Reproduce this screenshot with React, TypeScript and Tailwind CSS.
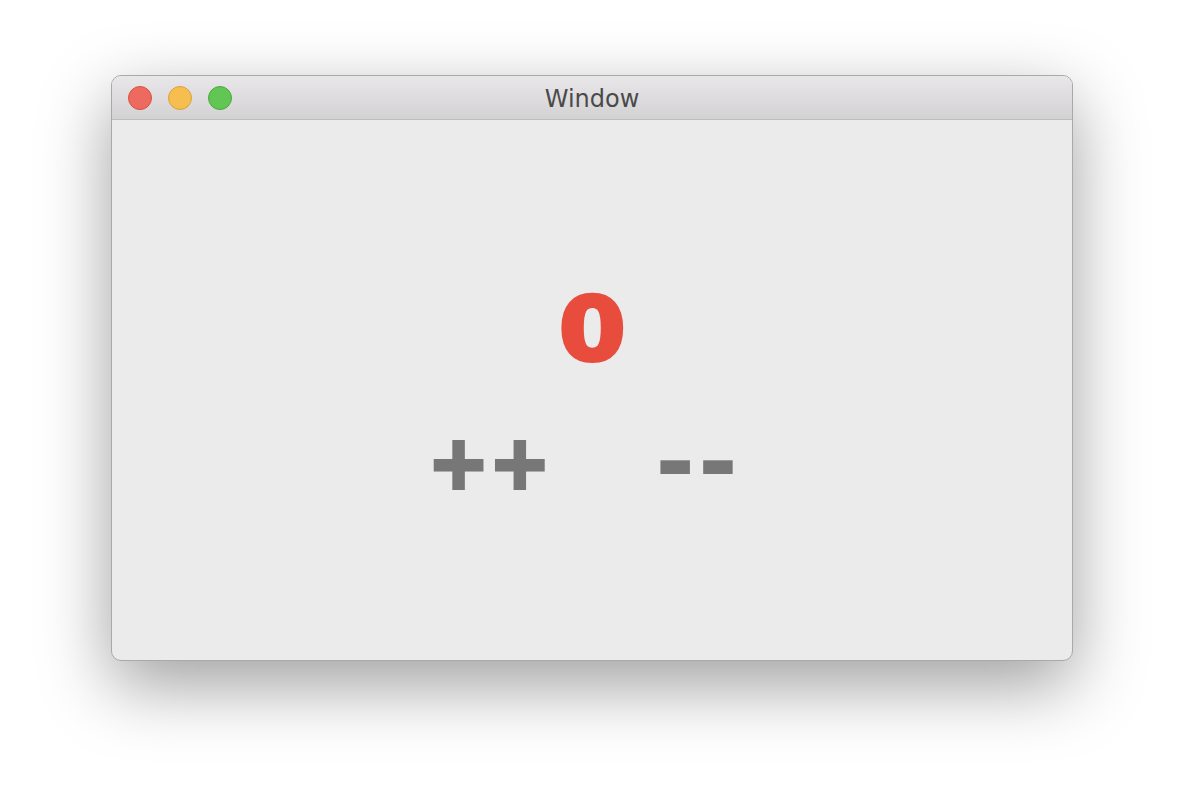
import { useState } from "react";

const App = () => {
  const [count, setCount] = useState(0);

  return (
    <div className="w-[1184px] h-[808px] bg-white pt-[75px] pl-[111px]">
      {/* Window */}
      <div className="w-[962px] h-[586px] rounded-[10px] border border-[#a9a9a9] bg-[#ebebeb] shadow-[0_24px_70px_rgba(0,0,0,0.38)] flex flex-col overflow-hidden">
        {/* Title bar */}
        <div className="h-[44px] shrink-0 relative flex items-center justify-center bg-gradient-to-b from-[#e9e7e9] to-[#d3d2d3] border-b border-[#bdbdbd]">
          <div className="absolute left-[16px] top-[10px] flex gap-[16px]">
            <span className="w-[24px] h-[24px] rounded-full bg-[#ee6a5f] border border-[#d45147]" />
            <span className="w-[24px] h-[24px] rounded-full bg-[#f6be4f] border border-[#d9a23c]" />
            <span className="w-[24px] h-[24px] rounded-full bg-[#62c655] border border-[#4ca83e]" />
          </div>
          <span className="pt-[2px] text-[24px] text-[#4a4a4a] font-['DejaVu_Sans',sans-serif]">
            Window
          </span>
        </div>

        {/* Content */}
        <div className="flex-1 flex flex-col items-center justify-center font-['DejaVu_Sans',sans-serif] font-bold">
          <div className="text-[87px] leading-none text-[#e84c3d] scale-x-[1.1] [-webkit-text-stroke:4px_#e84c3d]">
            {count}
          </div>
          <div className="mt-[40px] flex items-center gap-[88px] text-[#777777]">
            <button
              className="w-[120px] h-[80px] pt-[12px] pr-[4px] text-[73px] leading-none [-webkit-text-stroke:4px_#777777]"
              onClick={() => setCount(count + 1)}
            >
              ++
            </button>
            <button
              className="w-[120px] h-[80px] pl-[4px] text-[96px] leading-none tracking-[3px] pb-[12px]"
              onClick={() => setCount(count - 1)}
            >
              --
            </button>
          </div>
        </div>
      </div>
    </div>
  );
};

export default App;
